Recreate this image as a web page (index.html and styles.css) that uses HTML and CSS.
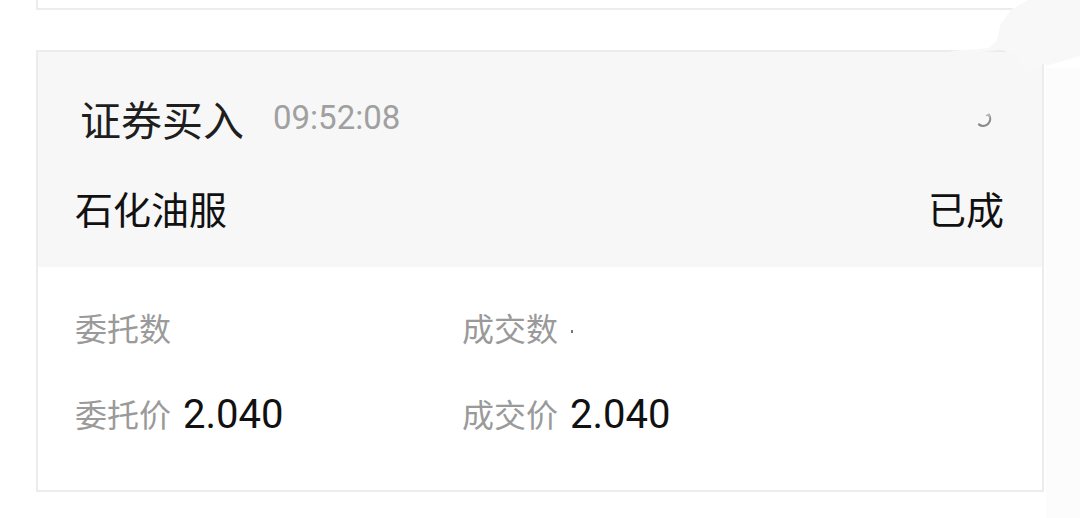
FILE: index.html
```html
<!DOCTYPE html>
<html lang="zh-CN">
<head>
<meta charset="utf-8">
<link rel="stylesheet" href="styles.css">
</head>
<body>
<div class="page">
  <div class="card-prev"></div>
  <div class="card">
    <div class="head">
      <div class="row-title">
        <span class="title">证券买入</span>
        <span class="time">09:52:08</span>
        <svg class="icon" width="20" height="22" viewBox="0 0 20 22">
          <path d="M15 6 A7 7 0 0 1 5 15.5" fill="none" stroke="#8a8a8a" stroke-width="2.2" stroke-linecap="round"/>
          <path d="M12.5 6.5 L15 5.5 L15.8 8" fill="none" stroke="#b5b5b5" stroke-width="1.4" stroke-linecap="round"/>
        </svg>
      </div>
      <div class="row-name">
        <span class="name">石化油服</span>
        <span class="status">已成</span>
      </div>
    </div>
    <div class="body">
      <div class="cell"><span class="label">委托数</span></div>
      <div class="cell"><span class="label">成交数</span><span class="dot"></span></div>
      <div class="cell"><span class="label">委托价</span><span class="value">2.040</span></div>
      <div class="cell"><span class="label">成交价</span><span class="value">2.040</span></div>
    </div>
  </div>
  <div class="smudge"></div>
  <div class="edge"></div>
</div>
</body>
</html>
```
FILE: styles.css
```css
html, body {
  margin: 0;
  padding: 0;
  background: #ffffff;
  font-family: "Noto Sans CJK SC", "Noto Sans", sans-serif;
}
.page {
  position: relative;
  width: 1080px;
  height: 518px;
  overflow: hidden;
  padding: 0 36px;
  box-sizing: border-box;
}
.card-prev {
  height: 8px;
  border: 2px solid #ececec;
  border-top: none;
  margin-bottom: 40px;
}
.card {
  border: 2px solid #ececec;
  display: flex;
  flex-direction: column;
}
.head {
  background: #f7f7f7;
  height: 215px;
  box-sizing: border-box;
  padding-top: 46px;
  display: flex;
  flex-direction: column;
}
.row-title {
  height: 40px;
  display: flex;
  align-items: center;
  padding-left: 42px;
  padding-right: 48px;
}
.title {
  font-size: 41px;
  color: #1e1e1e;
  line-height: 40px;
}
.time {
  font-family: Roboto, "Noto Sans", sans-serif;
  font-size: 33px;
  color: #a0a0a0;
  margin-left: 29px;
  line-height: 40px;
}
.icon {
  margin-left: auto;
  margin-top: 4px;
}
.row-name {
  margin-top: 50px;
  height: 40px;
  display: flex;
  align-items: center;
  justify-content: space-between;
  padding-left: 37px;
  padding-right: 38px;
}
.name, .status {
  font-size: 38px;
  color: #111111;
  line-height: 40px;
}
.body {
  height: 223px;
  box-sizing: border-box;
  padding: 40px 0 0 37px;
  display: grid;
  grid-template-columns: 387px 1fr;
  grid-template-rows: 40px 40px;
  row-gap: 46px;
  align-content: start;
}
.cell {
  display: flex;
  align-items: center;
}
.label {
  font-size: 32px;
  color: #9a9a9a;
  line-height: 40px;
}
.value {
  font-family: Roboto, "Noto Sans", sans-serif;
  font-size: 40px;
  color: #111111;
  margin-left: 12px;
  line-height: 40px;
  position: relative;
  top: 2px;
}
.dot {
  width: 2px;
  height: 3px;
  background: #777;
  margin-left: 13px;
  margin-top: 8px;
}
.smudge {
  position: absolute;
  top: 0;
  left: 950px;
  width: 130px;
  height: 80px;
  background: #f8f8f8;
  clip-path: polygon(60% 0, 100% 0, 100% 70%, 75% 82%, 72% 80%, 60% 90%, 50% 70%, 40% 62%, 20% 66%, 4% 66%, 0 64%, 30% 60%, 36% 50%, 39% 30%, 47% 12%);
}
.edge {
  position: absolute;
  top: 68px;
  left: 1046px;
  width: 34px;
  height: 450px;
  background: #fcfcfc;
}
```
